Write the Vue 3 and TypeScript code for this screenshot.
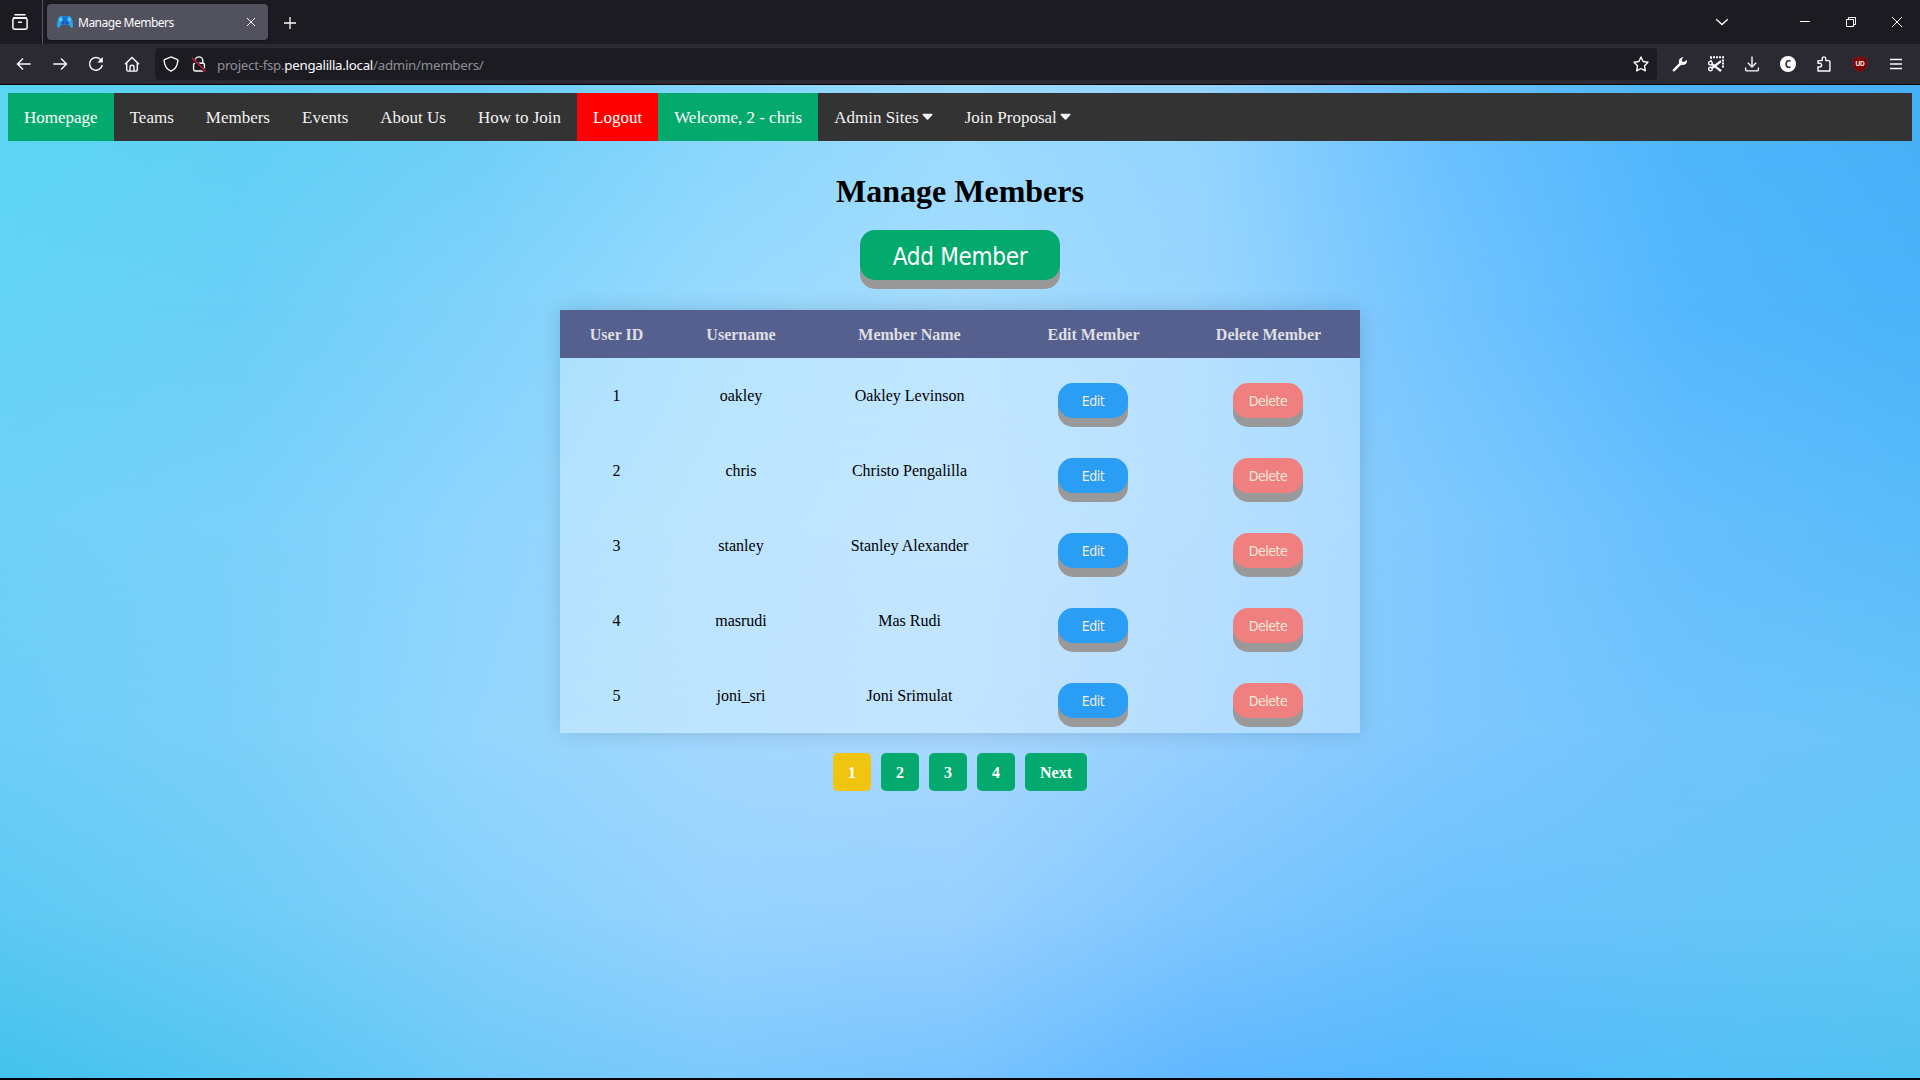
<script setup lang="ts">
interface NavLink {
  label: string
  tone?: 'green' | 'red'
  caret?: boolean
}

interface Member {
  id: number
  username: string
  name: string
}

const navLinks: NavLink[] = [
  { label: 'Homepage', tone: 'green' },
  { label: 'Teams' },
  { label: 'Members' },
  { label: 'Events' },
  { label: 'About Us' },
  { label: 'How to Join' },
  { label: 'Logout', tone: 'red' },
  { label: 'Welcome, 2 - chris', tone: 'green' },
  { label: 'Admin Sites', caret: true },
  { label: 'Join Proposal', caret: true },
]

const members: Member[] = [
  { id: 1, username: 'oakley', name: 'Oakley Levinson' },
  { id: 2, username: 'chris', name: 'Christo Pengalilla' },
  { id: 3, username: 'stanley', name: 'Stanley Alexander' },
  { id: 4, username: 'masrudi', name: 'Mas Rudi' },
  { id: 5, username: 'joni_sri', name: 'Joni Srimulat' },
]

const pages = ['1', '2', '3', '4', 'Next']

// Backdrop: evenly spaced colours across the page, one list per height (percent)
const sky: { at: number; colors: string[] }[] = [
  { at: 0, colors: ['#5ad6f2', '#5ed0f4', '#6bcff8', '#86d5fc', '#9adbff', '#93d5ff', '#68c0ff', '#4db5fb', '#46b0f7'] },
  { at: 22, colors: ['#64d4f5', '#6acff7', '#80d2fb', '#98daff', '#a5dcff', '#98d5ff', '#72c4ff', '#54b7fd', '#4ab3f9'] },
  { at: 45, colors: ['#70d1f7', '#7ad1fa', '#8fd5ff', '#a1daff', '#aadbff', '#9ad2ff', '#7fc9ff', '#66bffd', '#5abcf9'] },
  { at: 66, colors: ['#6dcef9', '#7ad0f9', '#93d6fe', '#a3d8ff', '#a8d8ff', '#95cfff', '#7fc8ff', '#6fc4fc', '#69c5f9'] },
  { at: 84, colors: ['#5dc9f3', '#6dccf7', '#84d0fb', '#97d3ff', '#97d0ff', '#7ec6ff', '#6bc1fd', '#67c4f9', '#62c8f5'] },
  { at: 100, colors: ['#42c2ec', '#56c5f2', '#6ec9f8', '#7dc9fd', '#78c3ff', '#60b7ff', '#54b9fb', '#53bff6', '#50c1f0'] },
]

function bandStyle(i: number) {
  const row = sky[i]
  const style: Record<string, string> = {
    background: `linear-gradient(to right, ${row.colors.join(', ')})`,
  }
  if (i > 0) {
    style.maskImage = `linear-gradient(to bottom, transparent ${sky[i - 1].at}%, #000 ${row.at}%)`
  }
  return style
}
</script>

<template>
  <div class="window">
    <header class="tabs">
      <div class="recent">
        <svg width="18" height="18" viewBox="0 0 18 18" fill="none" stroke="#fbfbfe" stroke-width="1.5" stroke-linecap="round">
          <path d="M4 1.7h10" /><path d="M2.6 4.8h12.8" /><rect x="1.9" y="5.2" width="14.2" height="11" rx="2" /><path d="M7.6 9.2h2.8" />
        </svg>
      </div>
      <div class="tab">
        <svg class="favicon" width="16" height="16" viewBox="0 0 16 16">
          <path d="M2.500 2.800c.8-1 2-1 3-.6h5c1-.4 2.200-.4 3 .6 1.500 1.500 2.500 5 2.500 9.200 0 1.900-1.900 2.300-2.800 1L11.800 10.600H4.200L2.800 13C1.900 14.300 0 13.900 0 12 0 7.800 1 4.300 2.500 2.800z" fill="#2ba3ee" />
          <path d="M5.400 2.400h5.200l1.200 8.200H4.200z" fill="#1a6fc8" />
          <circle cx="3.900" cy="5.600" r="1.800" fill="#56ccf8" /><circle cx="12.100" cy="5.600" r="1.800" fill="#56ccf8" />
          <circle cx="5.800" cy="8.800" r="1.300" fill="#1553a8" /><circle cx="10.200" cy="8.800" r="1.300" fill="#1553a8" />
        </svg>
        <span class="tab-title">Manage Members</span>
        <svg class="tab-close" width="10" height="10" viewBox="0 0 10 10" stroke="#fbfbfe" stroke-width="1"><path d="M1 1l8 8M9 1L1 9" /></svg>
      </div>
      <svg class="plus" width="14" height="14" viewBox="0 0 14 14" stroke="#fbfbfe" stroke-width="1.300"><path d="M7 1v12M1 7h12" /></svg>
      <div class="controls">
        <svg class="list" width="14" height="8" viewBox="0 0 14 8" fill="none" stroke="#fbfbfe" stroke-width="1.300"><path d="M1.200 1.200L7 6.600l5.800-5.400" /></svg>
        <svg width="46" height="44" viewBox="0 0 46 44" stroke="#fff"><path d="M18 21.500h10" /></svg>
        <svg width="46" height="44" viewBox="0 0 46 44" fill="none" stroke="#fff"><path d="M18.500 19.500h7v7h-7zM20.500 19v-1.500h7v7H26" /></svg>
        <svg width="46" height="44" viewBox="0 0 46 44" stroke="#fff"><path d="M18 17l10 10M28 17L18 27" /></svg>
      </div>
    </header>

    <div class="toolbar">
      <div class="tool"><svg viewBox="0 0 16 16"><path d="M1.500 8h13.200M7 2.600L1.500 8 7 13.400" /></svg></div>
      <div class="tool"><svg viewBox="0 0 16 16"><path d="M14.500 8H1.300M9 2.600L14.500 8 9 13.400" /></svg></div>
      <div class="tool"><svg viewBox="0 0 16 16"><path d="M12.900 3.700A6.400 6.400 0 1 0 14.300 9" /><path d="M14.800 1v5.600H9.300z" fill="#fbfbfe" stroke="none" /></svg></div>
      <div class="tool"><svg viewBox="0 0 16 16"><path d="M1 8.300L8 1.500l7 6.800M2.700 7v6.700a1.400 1.400 0 0 0 1.400 1.400h7.800a1.400 1.400 0 0 0 1.400-1.400V7" /><path d="M6 15v-3.800a2 2 0 0 1 4 0V15" /></svg></div>
      <div class="url">
        <svg class="shield" viewBox="0 0 16 16"><path d="M8 .9l6 2.400c.7.200 1 .7.900 1.400C14.500 9.600 12.300 13.200 8 15.200 3.700 13.200 1.500 9.600 1.100 4.700c0-.7.200-1.200.9-1.400z" /></svg>
        <svg class="lock" viewBox="0 0 16 16"><path d="M4.200 7V4.700a3.800 3.800 0 0 1 7.600 0V7" /><rect x="2.600" y="7.200" width="10.800" height="7.800" rx="1.400" /><path d="M1.200 2.400l13.400 13.200" stroke="#1c1b22" stroke-width="3" /><path d="M1.200 2l13.600 13.600" stroke="#e8143f" stroke-width="1.300" /></svg>
        <span class="address">project-fsp.<b>pengalilla.local</b>/admin/members/</span>
        <svg class="star" viewBox="0 0 16 16"><path d="M8 1l2.100 4.500 4.900.7-3.500 3.500.8 5.200L8 12.500 3.700 14.900l.8-5.200L1 6.200l4.900-.7z" stroke-linejoin="round" /></svg>
      </div>
      <div class="tool"><svg viewBox="0 0 16 16"><path d="M2 14.200l6.200-6.300" stroke-width="2.600" stroke-linecap="round" /><path d="M11.600 1.200A4.200 4.200 0 0 0 7 6.700a4.200 4.200 0 0 0 7.800-3l-2.600 2.200-2.100-.3-.4-2z" fill="#fbfbfe" stroke="none" /></svg></div>
      <div class="tool">
        <svg viewBox="0 0 16 16">
          <path d="M2 1.200h14" stroke-width="2" stroke-dasharray="2 1" /><path d="M15 3.400v9" stroke-width="2" stroke-dasharray="2 1" /><path d="M3 1v4" stroke-width="1.500" stroke-dasharray="2 1" />
          <circle cx="2.400" cy="7.200" r="1.800" /><circle cx="2.400" cy="13" r="1.800" /><path d="M4 8.200L13 15M4 12L13 5.200" stroke-width="2.200" />
        </svg>
      </div>
      <div class="tool"><svg viewBox="0 0 16 16"><path d="M8 .5v10.200M3.800 6.700L8 10.900l4.200-4.200M1.600 11.400v1.900a1.600 1.600 0 0 0 1.600 1.600h9.600a1.600 1.600 0 0 0 1.600-1.600v-1.900" /></svg></div>
      <div class="tool"><span class="badge-c">C</span></div>
      <div class="tool"><svg viewBox="0 0 16 16"><path d="M2 15V11h1.700a1.700 1.700 0 0 0 0-3.800H2V4.600h4.200V2.700a1.800 1.800 0 0 1 3.600 0v1.900h2.900a1.200 1.200 0 0 1 1.200 1.200V15z" stroke-linejoin="round" /></svg></div>
      <div class="tool">
        <span class="ublock">
          <svg viewBox="0 0 16 16"><path d="M8 0c2 1.200 4 1.700 6.800 1.800v6.400c0 3.700-3 6-6.800 7.800-3.800-1.800-6.800-4.100-6.800-7.800V1.800C4 1.700 6 1.200 8 0z" fill="#800000" stroke="#65333a" stroke-width=".5" /></svg>
          <i>UD</i>
        </span>
      </div>
      <div class="tool"><svg viewBox="0 0 16 16"><path d="M2 3.500h12M2 8h12M2 12.500h12" /></svg></div>
    </div>

    <main class="page">
      <div class="sky">
        <div v-for="(row, i) in sky" :key="row.at" class="band" :style="bandStyle(i)"></div>
      </div>

      <nav class="topnav">
        <a v-for="link in navLinks" :key="link.label" :class="link.tone">
          {{ link.label }}<svg v-if="link.caret" class="caret" width="11" height="8" viewBox="0 0 11 8"><path d="M1.300.8h8.400c.8 0 1.100.8.600 1.300L6.200 6.500c-.4.400-1 .4-1.400 0L.7 2.100C.2 1.600.5.800 1.300.8z" fill="#f2f2f2" /></svg>
        </a>
      </nav>

      <h1>Manage Members</h1>
      <button class="add">Add Member</button>

      <table>
        <colgroup>
          <col class="c-id" /><col class="c-user" /><col class="c-name" /><col class="c-edit" /><col class="c-delete" />
        </colgroup>
        <thead>
          <tr>
            <th>User ID</th>
            <th>Username</th>
            <th>Member Name</th>
            <th>Edit Member</th>
            <th>Delete Member</th>
          </tr>
        </thead>
        <tbody>
          <tr v-for="m in members" :key="m.id">
            <td>{{ m.id }}</td>
            <td>{{ m.username }}</td>
            <td>{{ m.name }}</td>
            <td class="act"><button class="action edit">Edit</button></td>
            <td class="act"><button class="action delete">Delete</button></td>
          </tr>
        </tbody>
      </table>

      <div class="pagination">
        <a v-for="p in pages" :key="p" :class="{ current: p === '1' }">{{ p }}</a>
      </div>
    </main>
  </div>
</template>

<style>
body {
  margin: 0;
  background: #000;
}
</style>

<style scoped>
* {
  box-sizing: border-box;
}
.window {
  width: 1920px;
  height: 1080px;
  display: flex;
  flex-direction: column;
  background: #000;
  overflow: hidden;
  font-family: "Liberation Serif", serif;
}
.tabs {
  height: 44px;
  flex: none;
  display: flex;
  background: #1c1b22;
  align-items: center;
  font-family: "Noto Sans", sans-serif;
}
.recent {
  width: 43px;
  height: 44px;
  padding: 13px 0 0 11px;
  border-right: 1px solid #55545c;
}
.tab {
  width: 221px;
  height: 36px;
  margin-left: 4px;
  padding: 0 12px 0 10px;
  display: flex;
  align-items: center;
  border-radius: 4px;
  background: #52525e;
  box-shadow: 0 0 3px rgba(0, 0, 0, 0.5);
}
.tab-title {
  flex: 1;
  margin: 1px 0 0 5px;
  color: #fbfbfe;
  font-size: 12px;
  line-height: 16px;
  letter-spacing: -0.5px;
  white-space: nowrap;
}
.plus {
  margin: 1px 0 0 15px;
}
.controls {
  margin-left: auto;
  display: flex;
  align-items: center;
}
.list {
  margin-right: 53px;
}
.toolbar {
  height: 40px;
  flex: none;
  display: flex;
  align-items: center;
  padding: 0 6px;
  background: #2b2a33;
}
.toolbar svg {
  width: 16px;
  height: 16px;
  fill: none;
  stroke: #fbfbfe;
  stroke-width: 1.4;
  flex: none;
}
.tool {
  width: 36px;
  height: 36px;
  display: flex;
  align-items: center;
  justify-content: center;
}
.url {
  flex: 1;
  height: 32px;
  margin: 0 5px;
  padding: 0 8px;
  display: flex;
  align-items: center;
  border-radius: 4px;
  background: #1c1b22;
}
.url .lock {
  margin-left: 12px;
}
.address {
  flex: 1;
  margin: 1px 0 0 10px;
  color: #8f8f96;
  font-family: "Noto Sans", sans-serif;
  font-size: 13.3px;
  line-height: 20px;
  letter-spacing: -0.27px;
}
.address b {
  color: #fbfbfe;
  font-weight: 400;
}
.badge-c {
  width: 16px;
  height: 16px;
  border-radius: 8px;
  background: #fff;
  color: #1c1b22;
  font: 700 10px/16px "Open Sans", sans-serif;
  text-align: center;
}
.ublock {
  position: relative;
  width: 16px;
  height: 16px;
}
.ublock svg {
  display: block;
}
.ublock i {
  position: absolute;
  left: 0;
  top: 3px;
  width: 16px;
  color: #fff;
  font: 700 6.5px/9px "Liberation Sans", sans-serif;
  letter-spacing: -0.3px;
  text-align: center;
}
.page {
  position: relative;
  z-index: 0;
  height: 993px;
  margin-top: 1px;
  padding: 8px;
  flex: none;
  display: flex;
  flex-direction: column;
  align-items: center;
}
.sky,
.band {
  position: absolute;
  inset: 0;
  z-index: -1;
}
.topnav {
  align-self: stretch;
  height: 48px;
  flex: none;
  display: flex;
  background: #333;
}
.topnav a {
  padding: 15px 16px 13px;
  color: #f2f2f2;
  font-size: 17px;
  line-height: 20px;
  white-space: nowrap;
}
.topnav .green {
  background: #04aa6d;
  color: #fff;
}
.topnav .red {
  background: #f00;
  color: #fff;
}
.caret {
  margin-left: 3px;
  vertical-align: 2px;
}
h1 {
  margin: 32px 0 0;
  font-size: 32px;
  line-height: 37px;
}
button {
  display: block;
  border: 0;
  padding: 0;
  border-radius: 15px;
  box-shadow: 0 9px #999;
  font-family: "DejaVu Sans Condensed", "DejaVu Sans", sans-serif;
  font-stretch: condensed;
}
.add {
  width: 200px;
  height: 50px;
  margin-top: 20px;
  padding-top: 3px;
  flex: none;
  background: #04aa6d;
  color: #fff;
  font-size: 24px;
  letter-spacing: -0.3px;
}
table {
  width: 800px;
  margin-top: 30px;
  table-layout: fixed;
  border-collapse: collapse;
  background: rgba(255, 255, 255, 0.3);
  box-shadow: 0 0 20px rgba(0, 0, 0, 0.15);
  font-size: 16px;
  text-align: center;
}
.c-id { width: 113px; }
.c-user { width: 136px; }
.c-name { width: 201px; }
.c-edit { width: 167px; }
.c-delete { width: 183px; }
th {
  height: 48px;
  padding: 2px 0 0;
  background: #55608f;
  color: #dfdfe2;
}
td {
  height: 75px;
  padding: 1px 0 0;
}
.act {
  padding: 0 1px 0 0;
}
.action {
  width: 70px;
  height: 35px;
  margin: 10px auto 0;
  color: #f4ead8;
  font-size: 14px;
  letter-spacing: -0.5px;
}
.edit {
  background: #2a9df4;
}
.delete {
  background: #f08080;
}
.pagination {
  display: flex;
  gap: 10px;
  margin-top: 20px;
}
.pagination a {
  padding: 11px 15px 9px;
  border-radius: 5px;
  background: #04aa6d;
  color: #fff;
  font-size: 16px;
  font-weight: 700;
  line-height: 18px;
}
.pagination .current {
  background: #f1c40f;
}
</style>
